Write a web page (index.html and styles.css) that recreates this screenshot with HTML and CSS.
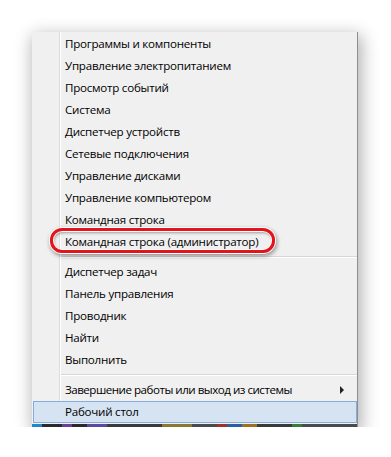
FILE: index.html
```html
<!DOCTYPE html>
<html lang="ru">
<head>
    <meta charset="UTF-8">
    <title>Меню</title>
    <link rel="stylesheet" href="styles.css">
</head>
<body>
    <div class="menu">
        <div class="item">Программы и компоненты</div>
        <div class="item">Управление электропитанием</div>
        <div class="item">Просмотр событий</div>
        <div class="item">Система</div>
        <div class="item">Диспетчер устройств</div>
        <div class="item">Сетевые подключения</div>
        <div class="item">Управление дисками</div>
        <div class="item">Управление компьютером</div>
        <div class="item">Командная строка</div>
        <div class="item marked">Командная строка (администратор)</div>
        <div class="sep"></div>
        <div class="item">Диспетчер задач</div>
        <div class="item">Панель управления</div>
        <div class="item">Проводник</div>
        <div class="item">Найти</div>
        <div class="item">Выполнить</div>
        <div class="sep"></div>
        <div class="item sub">Завершение работы или выход из системы</div>
        <div class="item active">Рабочий стол</div>
        <div class="taskbar"></div>
    </div>
</body>
</html>
```

FILE: styles.css
```css
body {
    margin: 0;
    background-color: #ffffff;
    font-family: "Open Sans", "Noto Sans", sans-serif;
    font-size: 11.6px;
    letter-spacing: -0.25px;
    color: #000;
}
.menu {
    position: relative;
    width: 324px;
    margin: 32px 0 0 32px;
    padding: 1px 0 0 1px;
    background-color: #f0f0f0;
    background-image: linear-gradient(to right, transparent 27px, #dcdcdc 27px, #dcdcdc 28px, #ffffff 28px, #ffffff 29px, transparent 29px);
    border-right: 1px solid #8e8e8e;
    box-shadow: 2px 5px 16px 2px rgba(0, 0, 0, 0.3);
}
.item {
    position: relative;
    height: 20px;
    line-height: 20px;
    padding-left: 31px;
    border: 1px solid transparent;
    white-space: nowrap;
}
.marked::after {
    content: "";
    position: absolute;
    left: 16px;
    top: -4px;
    width: 219px;
    height: 19px;
    border: 3.5px solid #e5141b;
    border-radius: 12px;
    box-shadow: 0 0 0 1px #ffffff, inset 0 0 0 1px #ffffff, 1px 2px 4px 1px rgba(0, 0, 0, 0.4), inset 1px 2px 3px rgba(0, 0, 0, 0.35);
}
.sep {
    height: 1px;
    margin: 3px 0 3px 28px;
    background-color: #d7d7d7;
    border-bottom: 1px solid #ffffff;
}
.sub {
    letter-spacing: -0.5px;
}
.sub::after {
    content: "";
    position: absolute;
    right: 12px;
    top: 6px;
    border-top: 4px solid transparent;
    border-bottom: 4px solid transparent;
    border-left: 4px solid #222;
}
.active {
    background-color: #d5e3f2;
    border-color: #84acdd;
}
.taskbar {
    height: 3px;
    margin: 1px 0 0 -1px;
    background: linear-gradient(to right, #1e88c8 0 10px, #2a2a2a 10px 30px, #6b3f98 30px 40px, #2a2a2a 40px 55px, #5a4aa0 55px 75px, #3a3a3a 75px 130px, #8a7a30 130px 160px, #4a4a4a 160px 185px, #a0302a 185px 195px, #2a60a0 195px 210px, #a07020 210px 225px, #3a3a3a 225px 260px, #3a7a3a 260px 270px, #4a4a4a 270px 325px);
}
```
